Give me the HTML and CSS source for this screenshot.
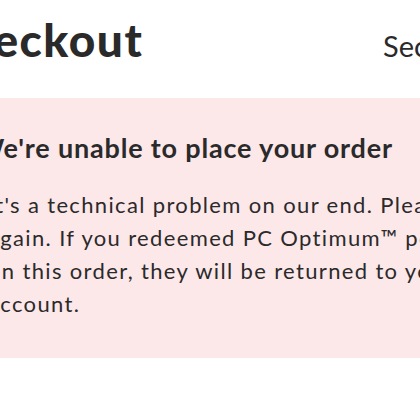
FILE: index.html
```html
<!DOCTYPE html>
<html lang="en">
<head>
<meta charset="utf-8">
<title>Checkout</title>
<link rel="stylesheet" href="styles.css">
</head>
<body>
<header class="topbar">
  <h1 class="title">Checkout</h1>
  <span class="secure">Secure checkout</span>
</header>
<section class="alert">
  <div class="alert-inner">
    <h2 class="alert-title">We're unable to place your order</h2>
    <p class="alert-text">It's a technical problem on our end. Please try<br>again. If you redeemed PC Optimum™ points<br>on this order, they will be returned to your<br>account.</p>
  </div>
</section>
</body>
</html>
```
FILE: styles.css
```css
html, body {
  margin: 0;
  padding: 0;
  background: #ffffff;
  overflow: hidden;
}
body {
  font-family: "Lato", "Liberation Sans", sans-serif;
  color: #2b2a2b;
  width: 420px;
}
.topbar {
  display: grid;
  grid-template-columns: 383px max-content;
  align-items: baseline;
  height: 98px;
  box-sizing: border-box;
  padding-top: 12px;
  white-space: nowrap;
}
.title {
  margin: 0 0 0 -66px;
  font-size: 46px;
  line-height: 56px;
  font-weight: 900;
  letter-spacing: 1.5px;
}
.secure {
  font-size: 29px;
  font-weight: 400;
}
.alert {
  background: #fde8e9;
  height: 260px;
  box-sizing: border-box;
  padding-top: 34px;
  white-space: nowrap;
}
.alert-inner {
  margin-left: -12px;
}
.alert-title {
  margin: 0 0 0 -12px;
  font-size: 27px;
  line-height: 32px;
  font-weight: 700;
  letter-spacing: 0.82px;
}
.alert-text {
  margin: 24px 0 0;
  font-size: 22px;
  line-height: 33px;
  font-weight: 400;
  letter-spacing: 1.35px;
}
```
